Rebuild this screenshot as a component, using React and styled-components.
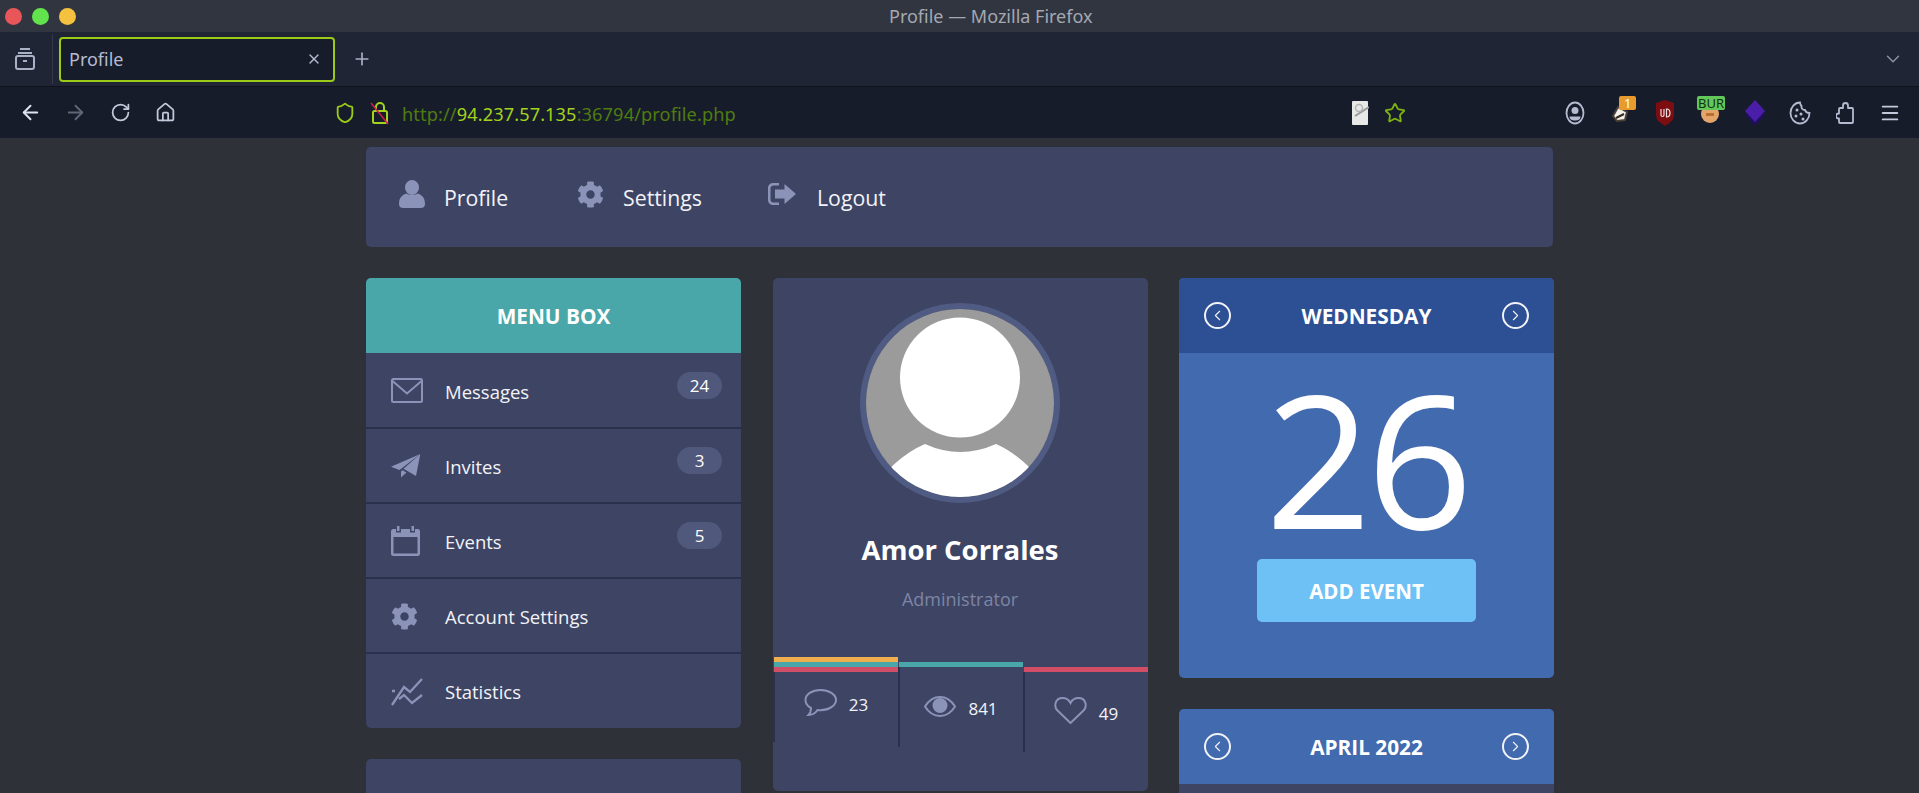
import styled, { createGlobalStyle } from "styled-components"
import { ArrowLeft, ArrowRight, RotateCw, House, Shield, Star, Plus, X, ChevronDown, ChevronLeft, ChevronRight, Menu as MenuLines } from "lucide-react"
import { FaCog } from "react-icons/fa"

const GlobalStyle = createGlobalStyle`
    html, body {
        margin: 0;
        height: 793px;
        overflow: hidden;
        background: #2e3138;
    }
    * { box-sizing: border-box; }
    body { font-family: "Open Sans", "Noto Sans", sans-serif; color: #fff; }
`

const Window = styled.div`
    width: 1919px;
    height: 793px;
    overflow: hidden;
`

/* browser chrome */
const TitleBar = styled.div`
    height: 32px;
    background: #31353f;
    position: relative;
    display: flex;
    align-items: center;
    padding-left: 5px;
    gap: 10px;
`

const Dot = styled.span`
    width: 17px;
    height: 17px;
    border-radius: 50%;
    background: ${props => props.$color};
`

const WindowTitle = styled.div`
    position: absolute;
    left: 889px;
    top: 6px;
    font-family: "Noto Sans", sans-serif;
    font-size: 18px;
    line-height: 20px;
    color: #a4a8b2;
`

const TabBar = styled.div`
    height: 55px;
    background: #1f2534;
    display: flex;
    align-items: center;
    border-bottom: 1px solid #10131c;
`

const TabManager = styled.div`
    width: 53px;
    height: 50px;
    padding-right: 3px;
    border-right: 1px solid #343a4a;
    display: flex;
    align-items: center;
    justify-content: center;
    color: #a9b1c6;
`

const Tab = styled.div`
    width: 276px;
    height: 45px;
    margin-left: 6px;
    padding: 0 11px 0 8px;
    border: 2px solid #9acb16;
    border-radius: 4px;
    background: #171c2b;
    display: flex;
    align-items: center;
    justify-content: space-between;
    font-family: "Noto Sans", sans-serif;
    font-size: 18px;
    color: #b4bbd0;
`

const NewTab = styled.div`
    margin-left: 17px;
    display: flex;
    color: #a9b1c6;
`

const TabEnd = styled.div`
    margin-left: auto;
    margin-right: 15px;
    display: flex;
    color: #8d94a8;
`

const NavBar = styled.div`
    height: 51px;
    background: #171c2b;
    display: flex;
    align-items: center;
    padding: 0 7px 0 8px;
`

const Slot = styled.div`
    width: ${props => props.$w || 45}px;
    height: 36px;
    margin-left: ${props => props.$ml || 0}px;
    position: relative;
    display: flex;
    align-items: center;
    justify-content: center;
    color: ${props => props.$color || "#dfe4f2"};
`

const UrlBar = styled.div`
    width: 1080px;
    margin-left: 145px;
    display: flex;
    align-items: center;
`

const UrlText = styled.div`
    margin: 2px 0 0 10px;
    font-family: "Noto Sans", sans-serif;
    font-size: 18.2px;
    letter-spacing: 0.1px;
    color: #4f7c10;
    b { font-weight: 400; color: #a3d31b; }
`

const PageActions = styled.div`
    margin-left: auto;
    display: flex;
    align-items: center;
`

const NavRight = styled.div`
    margin-left: auto;
    display: flex;
    align-items: center;
`

const ExtBadge = styled.span`
    position: absolute;
    top: 1px;
    left: ${props => props.$left}px;
    height: 14px;
    padding: 0 ${props => props.$pad}px;
    border-radius: 2px;
    background: ${props => props.$color};
    color: ${props => props.$text};
    font-family: "Noto Sans", sans-serif;
    font-size: 13px;
    line-height: 14px;
`

/* page */
const Page = styled.div`
    width: 1187px;
    margin: 0 auto;
    padding-top: 9px;
`

const TopNav = styled.nav`
    height: 100px;
    background: #3e4463;
    border-radius: 5px;
    display: flex;
    align-items: center;
    padding-left: 33px;
`

const TopLink = styled.a`
    width: ${props => props.$w}px;
    display: flex;
    align-items: center;
    gap: ${props => props.$gap}px;
    font-size: 21.3px;
    color: #f2f3f8;
    svg { color: #8b93b8; flex: none; margin-top: -6px; }
`

const Columns = styled.div`
    margin-top: 31px;
    display: grid;
    grid-template-columns: repeat(3, 375px);
    gap: 31.5px;
`

const Column = styled.div`
    display: flex;
    flex-direction: column;
    gap: 31px;
`

const Card = styled.section`
    background: ${props => props.$bg || "#3e4463"};
    border-radius: 5px;
    overflow: hidden;
    height: ${props => props.$h ? props.$h + "px" : "auto"};
`

const CardHead = styled.header`
    height: 75px;
    background: ${props => props.$bg};
    display: flex;
    align-items: center;
    justify-content: ${props => props.$arrows ? "space-between" : "center"};
    padding: 0 25px;
    font-size: 20.8px;
    font-weight: 700;
    color: #fff;
`

const MenuList = styled.div`
    padding-top: 1px;
`

const MenuRow = styled.a`
    height: ${props => props.$last ? 74 : 75}px;
    padding: 1px 0 0 25px;
    position: relative;
    display: flex;
    align-items: center;
    font-size: 18.5px;
    color: #f2f3f8;
    border-bottom: ${props => props.$last ? "none" : "2px solid #2b304c"};
`

const RowIcon = styled.span`
    width: 54px;
    display: flex;
    color: #8b93b8;
`

const Badge = styled.span`
    position: absolute;
    top: 18px;
    right: 19px;
    width: 45px;
    height: 27px;
    border-radius: 14px;
    background: #50597b;
    font-size: 17px;
    line-height: 27px;
    text-align: center;
    color: #fff;
`

const Avatar = styled.div`
    width: 200px;
    height: 200px;
    margin: 25px auto 0;
    border: 6px solid #4f5b82;
    border-radius: 50%;
    overflow: hidden;
    svg { display: block; }
`

const Name = styled.h2`
    margin: 29px 0 0;
    text-align: center;
    font-size: 27.5px;
    line-height: 36px;
    font-weight: 700;
    color: #fff;
`

const Role = styled.p`
    margin: 19px 0 0;
    text-align: center;
    font-size: 18px;
    line-height: 24px;
    color: #7d84a5;
`

const Stats = styled.div`
    margin-top: 46px;
    display: grid;
    grid-template-columns: repeat(3, 1fr);
    align-items: start;
    height: 134px;
`

const StatCol = styled.div`
    margin-top: ${props => props.$offset}px;
`

const Bar = styled.div`
    height: 5px;
    margin-left: 1px;
    background: ${props => props.$color};
`

const StatBody = styled.div`
    height: ${props => props.$h}px;
    padding-top: ${props => props.$top}px;
    border-left: 2px solid #2b304c;
    display: flex;
    justify-content: center;
    align-items: flex-start;
    gap: 12px;
    font-size: 17px;
    color: #f2f3f8;
    svg { color: #8b93b8; flex: none; }
    span { margin-top: ${props => props.$text}px; line-height: 22px; }
`

const CircleArrow = styled.span`
    width: 27px;
    height: 27px;
    border: 2px solid #f0f2f8;
    border-radius: 50%;
    display: flex;
    align-items: center;
    justify-content: center;
    color: #f0f2f8;
`

const DayBody = styled.div`
    height: 325px;
    display: flex;
    flex-direction: column;
    align-items: center;
`

const DayNumber = styled.div`
    margin-top: 1px;
    font-size: 186px;
    line-height: 205px;
    letter-spacing: -5px;
    color: #fff;
`

const AddButton = styled.button`
    width: 219px;
    height: 63px;
    border: none;
    border-radius: 5px;
    background: #6ec1f5;
    color: #fff;
    font-family: inherit;
    font-size: 20.5px;
    font-weight: 700;
`

const UserIcon = () => (
    <svg width="26" height="28" viewBox="0 0 26 28" fill="currentColor">
        <ellipse cx="13" cy="7.5" rx="7" ry="7.5" />
        <path d="M0 24c0-7 4-9.5 7.5-10.5 3.2 2 7.8 2 11 0C22 14.500 26 17 26 24c0 2.500-1.500 4-4 4H4c-2.500 0-4-1.500-4-4z" />
    </svg>
)

const LogoutIcon = () => (
    <svg width="28" height="22" viewBox="0 0 28 22" fill="currentColor">
        <path d="M11 0H5C2.200 0 0 2.200 0 5v12c0 2.800 2.200 5 5 5h6v-2.500H5.500C3.800 19.500 2.500 18.200 2.500 16.500v-11C2.500 3.800 3.800 2.500 5.500 2.500H11z" />
        <path d="M16.500 1 28 11 16.500 21v-5.500H7v-9h9.500z" />
    </svg>
)

const EnvelopeIcon = () => (
    <svg width="32" height="26" viewBox="0 0 32 26" fill="none" stroke="currentColor" strokeWidth="2">
        <rect x="1" y="1" width="30" height="23" rx="1.500" />
        <path d="M1.500 3 16 15.500 30.500 3" />
    </svg>
)

const PlaneIcon = () => (
    <svg width="30" height="24" viewBox="0 0 30 24" fill="currentColor">
        <path d="M0 12.700 29.300 0 8.500 16z" />
        <path d="M29.300 0 25 22 12.500 14.800z" />
        <path d="M10 17.500V23.500L15.500 18.500 11.500 16.200z" />
    </svg>
)

const CalendarIcon = () => (
    <svg width="29" height="30" viewBox="0 0 29 30" fill="currentColor">
        <path d="M6 0h2.500v5H6zM20.500 0H23v5h-2.500z" />
        <path d="M2.500 3H5v3.500h5V3h9v3.500h5V3h2.500A2.500 2.500 0 0 1 29 5.500v22a2.500 2.500 0 0 1-2.500 2.500h-24A2.500 2.500 0 0 1 0 27.500v-22A2.500 2.500 0 0 1 2.500 3zM2.500 11v16.500h24V11z" />
    </svg>
)

const StatsIcon = () => (
    <svg width="32" height="28" viewBox="0 0 32 28" fill="none" stroke="currentColor" strokeWidth="2.300">
        <path d="M1 27 13 9l6 5L31 1" />
        <path d="M8 21l5-4 8 8 10-8" />
        <path d="M1 13h3" />
    </svg>
)

const CommentIcon = () => (
    <svg width="33" height="28" viewBox="0 0 33 28" fill="none" stroke="currentColor" strokeWidth="2">
        <path d="M16.500 1C8 1 1.500 5.500 1.500 11c0 3.500 2.500 6.500 5.500 8 0 2.500-1 5.500-2.500 7 3.500 0 7-2 9-5 1 .2 2 .2 3 .2C25 21.200 32 16.500 32 11S25 1 16.500 1z" />
    </svg>
)

const EyeIcon = () => (
    <svg width="32" height="21" viewBox="0 0 32 21" fill="none" stroke="currentColor" strokeWidth="2">
        <path d="M1 10.500C5 4 10 1 16 1s11 3 15 9.500C27 17 22 20 16 20S5 17 1 10.500z" />
        <circle cx="16" cy="9.500" r="7.500" fill="currentColor" stroke="none" />
    </svg>
)

const HeartIcon = () => (
    <svg width="33" height="27" viewBox="0 0 33 27" fill="none" stroke="currentColor" strokeWidth="2">
        <path d="M16.500 26 3.500 13.500C-.5 9.500 1 1 8.500 1c3.500 0 6.500 2 8 5 1.500-3 4.500-5 8-5 7.500 0 9 8.500 5 12.500z" />
    </svg>
)

const AvatarArt = () => (
    <svg width="188" height="188" viewBox="0 0 188 188">
        <rect width="188" height="188" fill="#9b9b9b" />
        <circle cx="94" cy="68.500" r="60" fill="#fff" />
        <path d="M0 188Q28 148 59 135Q94 151 130 135Q160 148 188 188z" fill="#fff" />
    </svg>
)

const TabsIcon = () => (
    <svg width="22" height="24" viewBox="0 0 22 24" fill="none" stroke="currentColor" strokeWidth="2">
        <path d="M6 2h10" />
        <path d="M4 6h14" />
        <rect x="2" y="9" width="18" height="13" rx="2" />
        <path d="M9 14h4" />
    </svg>
)

const LockIcon = () => (
    <svg width="20" height="24" viewBox="0 0 20 24" fill="none">
        <rect x="3" y="10" width="14" height="12" rx="1.500" stroke="#a3d31b" strokeWidth="2" />
        <path d="M6 10V6a4 4 0 0 1 8 0v4" stroke="#a3d31b" strokeWidth="2" />
        <path d="M1 2 18 23" stroke="#d01f4f" strokeWidth="1.500" />
    </svg>
)

const PageDocIcon = () => (
    <svg width="18" height="24" viewBox="0 0 18 24">
        <rect width="16" height="24" x="1" rx="1" fill="#e8e8e8" />
        <path d="M4 15 18 6" stroke="#9a9a9a" strokeWidth="2" />
        <circle cx="8" cy="7" r="3.500" fill="none" stroke="#b5b5b5" strokeWidth="1.500" />
    </svg>
)

const AccountIcon = () => (
    <svg width="20" height="24" viewBox="0 0 20 24" fill="none">
        <ellipse cx="10" cy="12" rx="8.500" ry="10.500" stroke="#b4bbd0" strokeWidth="1.800" />
        <circle cx="10" cy="9.500" r="3.500" fill="#b4bbd0" />
        <path d="M4.500 15.500h11c0 3-2.500 4-5.500 4s-5.500-1-5.500-4z" fill="#b4bbd0" />
    </svg>
)

const DevIcon = () => (
    <svg width="20" height="20" viewBox="0 0 20 20">
        <path d="M3 13 8 4l9 5-2 8-8 1z" fill="#f4f1ea" stroke="#4a4038" strokeWidth="2" />
        <path d="M6 15l8-4" stroke="#32291f" strokeWidth="2" />
    </svg>
)

const UblockIcon = () => (
    <svg width="18" height="26" viewBox="0 0 18 26">
        <path d="M9 0l9 3v12c0 5-4 8-9 11-5-3-9-6-9-11V3z" fill="#7c0e12" />
        <path d="M5 9v6c0 2 3 2 3 0V9M10.500 9v8c3 0 3.500-1.500 3.500-4s-.5-4-3.500-4z" fill="none" stroke="#f0dede" strokeWidth="1.200" />
    </svg>
)

const BurpIcon = () => (
    <svg width="20" height="24" viewBox="0 0 20 24">
        <circle cx="10" cy="13" r="9" fill="#e3a56c" />
        <path d="M3 8h14" stroke="#f5eee2" strokeWidth="2" />
        <rect x="6" y="12" width="8" height="3" fill="#b96f2f" />
    </svg>
)

const DiamondIcon = () => (
    <svg width="22" height="26" viewBox="0 0 22 26">
        <path d="M11 4 21 15 11 26 1 15z" fill="#1f0f5c" />
        <path d="M11 0 21 11 11 22 1 11z" fill="#4a1ea8" />
    </svg>
)

const CookieIcon = () => (
    <svg width="22" height="24" viewBox="0 0 22 24" fill="#b4bbd0">
        <path d="M11 1.500a9.500 10.500 0 1 0 9.500 10.500c-2.500 0-4-1-4.500-3-2.500 0-4-2-3.500-4-1-1-1.500-2-1.500-3.500z" fill="none" stroke="#b4bbd0" strokeWidth="1.800" />
        <circle cx="8" cy="9" r="1.500" />
        <circle cx="12" cy="13" r="1.500" />
        <circle cx="7" cy="15" r="1.500" />
        <circle cx="14" cy="18" r="1.500" />
    </svg>
)

const PuzzleIcon = () => (
    <svg width="18" height="22" viewBox="0 0 18 22" fill="none" stroke="#b4bbd0" strokeWidth="1.800" strokeLinejoin="round">
        <path d="M7 6V3.500a2.500 2.500 0 0 1 5 0V6h4a1 1 0 0 1 1 1v13a1 1 0 0 1-1 1H4a1 1 0 0 1-1-1v-3.500H2.500a2.500 2.500 0 0 1 0-5H3V7a1 1 0 0 1 1-1z" />
    </svg>
)

const menuItems = [
    { label: "Messages", icon: <EnvelopeIcon />, count: 24 },
    { label: "Invites", icon: <PlaneIcon />, count: 3 },
    { label: "Events", icon: <CalendarIcon />, count: 5 },
    { label: "Account Settings", icon: <FaCog size={27} /> },
    { label: "Statistics", icon: <StatsIcon />, last: true },
]

const stats = [
    { value: 23, icon: <CommentIcon />, bars: ["#efaf4f", "#4aa7a9", "#d14f66"], offset: 0, h: 70, top: 17, text: 5 },
    { value: 841, icon: <EyeIcon />, bars: ["#4aa7a9"], offset: 5, h: 80, top: 29, text: 2 },
    { value: 49, icon: <HeartIcon />, bars: ["#d14f66"], offset: 10, h: 80, top: 25, text: 6 },
]

const Arrow = ({ right }) => (
    <CircleArrow>
        {right ? <ChevronRight size={17} strokeWidth={1.5} /> : <ChevronLeft size={17} strokeWidth={1.5} />}
    </CircleArrow>
)

const App = () => {
  return (
    <Window>
        <GlobalStyle />
        <TitleBar>
            <Dot $color="#e8565a" />
            <Dot $color="#62e24c" />
            <Dot $color="#f4c23e" />
            <WindowTitle>Profile — Mozilla Firefox</WindowTitle>
        </TitleBar>
        <TabBar>
            <TabManager><TabsIcon /></TabManager>
            <Tab>Profile <X size={16} color="#b4bbd0" /></Tab>
            <NewTab><Plus size={20} /></NewTab>
            <TabEnd><ChevronDown size={22} strokeWidth={1.5} /></TabEnd>
        </TabBar>
        <NavBar>
            <Slot><ArrowLeft size={23} /></Slot>
            <Slot $color="#5f6678"><ArrowRight size={23} /></Slot>
            <Slot $color="#c3c9da"><RotateCw size={21} /></Slot>
            <Slot $color="#c3c9da"><House size={21} /></Slot>
            <UrlBar>
                <Slot $w={24} $color="#9acb16"><Shield size={22} /></Slot>
                <Slot $w={24} $ml={11}><LockIcon /></Slot>
                <UrlText>http://<b>94.237.57.135</b>:36794/profile.php</UrlText>
                <PageActions>
                    <Slot $w={34}><PageDocIcon /></Slot>
                    <Slot $w={36} $color="#7fb30f"><Star size={22} /></Slot>
                </PageActions>
            </UrlBar>
            <NavRight>
                <Slot><AccountIcon /></Slot>
                <Slot>
                    <DevIcon />
                    <ExtBadge $left={22} $pad={5} $color="#e89a2c" $text="#fff">1</ExtBadge>
                </Slot>
                <Slot><UblockIcon /></Slot>
                <Slot>
                    <BurpIcon />
                    <ExtBadge $left={10} $pad={1} $color="#63c85a" $text="#123312">BUR</ExtBadge>
                </Slot>
                <Slot><DiamondIcon /></Slot>
                <Slot><CookieIcon /></Slot>
                <Slot><PuzzleIcon /></Slot>
                <Slot $color="#c3c9da"><MenuLines size={22} /></Slot>
            </NavRight>
        </NavBar>
        <Page>
            <TopNav>
                <TopLink $w={178} $gap={19}><UserIcon /> Profile</TopLink>
                <TopLink $w={191} $gap={19}><FaCog size={27} /> Settings</TopLink>
                <TopLink $w={140} $gap={21}><LogoutIcon /> Logout</TopLink>
            </TopNav>
            <Columns>
                <Column>
                    <Card>
                        <CardHead $bg="#4aa7a9">MENU BOX</CardHead>
                        <MenuList>
                            {menuItems.map(item => (
                                <MenuRow key={item.label} $last={item.last}>
                                    <RowIcon>{item.icon}</RowIcon>
                                    {item.label}
                                    {item.count && <Badge>{item.count}</Badge>}
                                </MenuRow>
                            ))}
                        </MenuList>
                    </Card>
                    <Card $h={300} />
                </Column>
                <Column>
                    <Card>
                        <Avatar><AvatarArt /></Avatar>
                        <Name>Amor Corrales</Name>
                        <Role>Administrator</Role>
                        <Stats>
                            {stats.map(stat => (
                                <StatCol key={stat.value} $offset={stat.offset}>
                                    {stat.bars.map(color => <Bar key={color} $color={color} />)}
                                    <StatBody $h={stat.h} $top={stat.top} $text={stat.text}>
                                        {stat.icon}
                                        <span>{stat.value}</span>
                                    </StatBody>
                                </StatCol>
                            ))}
                        </Stats>
                    </Card>
                </Column>
                <Column>
                    <Card $bg="#426aae">
                        <CardHead $bg="#2d5095" $arrows>
                            <Arrow />
                            WEDNESDAY
                            <Arrow right />
                        </CardHead>
                        <DayBody>
                            <DayNumber>26</DayNumber>
                            <AddButton>ADD EVENT</AddButton>
                        </DayBody>
                    </Card>
                    <Card $bg="#3e4463" $h={300}>
                        <CardHead $bg="#426aae" $arrows>
                            <Arrow />
                            APRIL 2022
                            <Arrow right />
                        </CardHead>
                    </Card>
                </Column>
            </Columns>
        </Page>
    </Window>
  )
}

export default App
